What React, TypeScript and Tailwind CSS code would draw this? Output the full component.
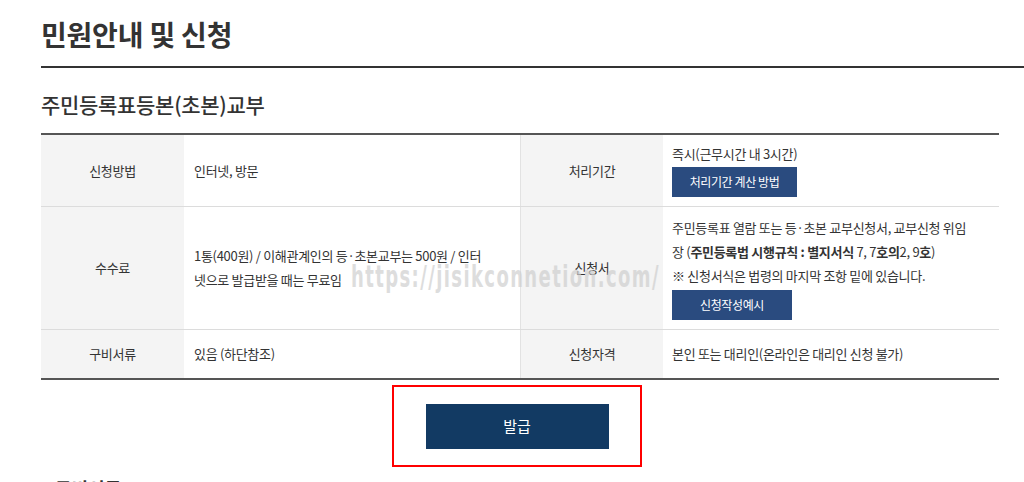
import React from 'react';

const kr = { fontFamily: '"Noto Sans CJK KR", "Noto Sans", sans-serif' };

function Label({ children, h, left }: { children: React.ReactNode; h: string; left?: boolean }) {
  return (
    <div
      className={`${h} bg-[#f4f4f4] flex items-center justify-center text-[13px] text-[#333] tracking-[-0.3px] ${
        left ? 'border-l border-[#e2e2e2]' : ''
      }`}
    >
      {children}
    </div>
  );
}

export default function App() {
  return (
    <div className="w-[1024px] h-[482px] overflow-hidden bg-white text-[#333]" style={kr}>
      <div className="pl-[41px]">
        {/* page title */}
        <div className="pt-[18px] pb-[16px] border-b-2 border-[#333]">
          <h1 className="text-[28px] font-bold leading-[32px] tracking-[-0.2px] text-[#333]">민원안내 및 신청</h1>
        </div>

        <h2 className="mt-[22px] text-[21px] font-medium leading-[28px] tracking-[-0.3px] text-[#333]">
          주민등록표등본(초본)교부
        </h2>

        {/* info table */}
        <div className="relative mt-[15px] w-[958px] border-t-2 border-b-2 border-[#555]">
          <div className="grid grid-cols-[143px_336px_143px_336px] text-[13px] tracking-[-0.3px]">
            {/* row 1 */}
            <div className="contents">
              <div className="border-b border-[#dcdcdc]">
                <Label h="h-[71px]">신청방법</Label>
              </div>
              <div className="h-[72px] border-b border-[#dcdcdc] flex items-center pl-[10px]">인터넷, 방문</div>
              <div className="border-b border-[#dcdcdc]">
                <Label h="h-[71px]" left>
                  처리기간
                </Label>
              </div>
              <div className="h-[72px] border-b border-[#dcdcdc] pl-[9px] pt-[9px]">
                <p className="leading-[20px]">즉시(근무시간 내 3시간)</p>
                <button className="mt-[3px] h-[30px] w-[125px] bg-[#2a4b7f] text-white text-[12px] tracking-[-0.4px]">
                  처리기간 계산 방법
                </button>
              </div>
            </div>

            {/* row 2 */}
            <div className="contents">
              <div className="border-b border-[#dcdcdc]">
                <Label h="h-[122px]">수수료</Label>
              </div>
              <div className="h-[123px] border-b border-[#dcdcdc] flex items-center pl-[10px] pr-[10px]">
                <p className="leading-[24px]">
                  1통(400원) / 이해관계인의 등·초본교부는 500원 / 인터
                  <br />
                  넷으로 발급받을 때는 무료임
                </p>
              </div>
              <div className="border-b border-[#dcdcdc]">
                <Label h="h-[122px]" left>
                  신청서
                </Label>
              </div>
              <div className="h-[123px] border-b border-[#dcdcdc] pl-[9px] pt-[9px]">
                <p className="leading-[24px] whitespace-nowrap">
                  주민등록표 열람 또는 등·초본 교부신청서, 교부신청 위임
                  <br />
                  장 (<b>주민등록법 시행규칙 : 별지서식</b> 7, 7<b>호의</b>2, 9<b>호</b>)
                  <br />※ 신청서식은 법령의 마지막 조항 밑에 있습니다.
                </p>
                <button className="mt-[2px] h-[30px] w-[120px] bg-[#2a4b7f] text-white text-[12px] tracking-[-0.4px]">
                  신청작성예시
                </button>
              </div>
            </div>

            {/* row 3 */}
            <div className="contents">
              <Label h="h-[48px]">구비서류</Label>
              <div className="h-[48px] flex items-center pl-[10px]">있음 (하단참조)</div>
              <Label h="h-[48px]" left>
                신청자격
              </Label>
              <div className="h-[48px] flex items-center pl-[9px]">본인 또는 대리인(온라인은 대리인 신청 불가)</div>
            </div>
          </div>

          {/* watermark */}
          <div
            className="absolute left-[310px] top-[119px] pointer-events-none text-[20px] font-bold text-[#cfcfcf] opacity-70 scale-y-150 origin-top-left tracking-[1.4px]"
            style={{ fontFamily: '"DejaVu Sans Condensed", "DejaVu Sans", sans-serif' }}
          >
            https://jisikconnetion.com/
          </div>
        </div>

        {/* issue button */}
        <div className="w-[958px] mt-[5px] flex justify-center pr-[6px]">
          <div className="border-2 border-[#ff0000] w-[250px] h-[82px] flex justify-center pt-[17px]">
            <button className="h-[45px] w-[183px] bg-[#123a63] text-white text-[15px]">발급</button>
          </div>
        </div>

        <h3 className="mt-[9px] pl-[14px] text-[18px] font-bold leading-[24px]">구비서류</h3>
      </div>
    </div>
  );
}
